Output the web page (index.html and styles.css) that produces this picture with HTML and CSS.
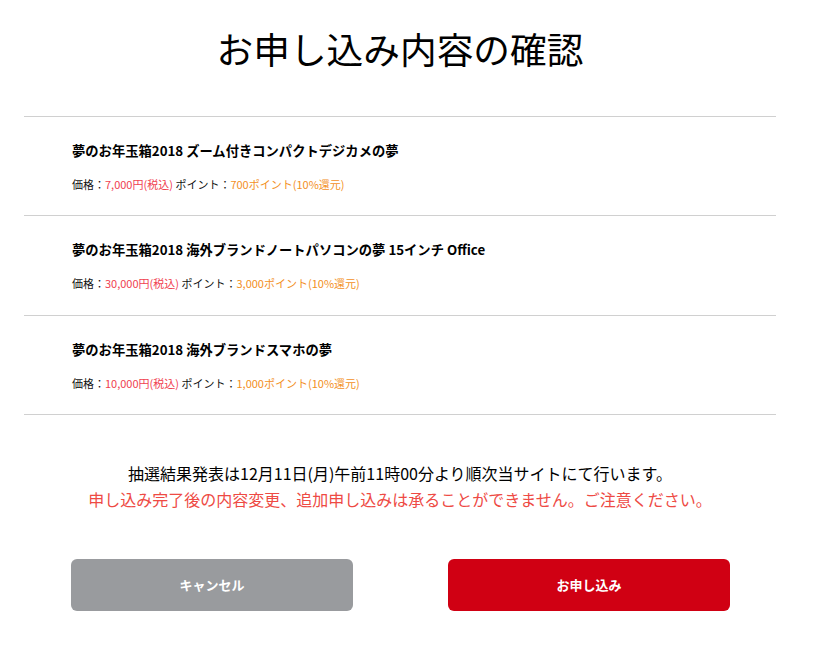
FILE: index.html
```html
<!DOCTYPE html>
<html lang="ja">
<head>
<meta charset="utf-8">
<title>お申し込み内容の確認</title>
<link rel="stylesheet" href="styles.css">
</head>
<body>
<main class="page">
  <h1 class="title">お申し込み内容の確認</h1>
  <ul class="items">
    <li class="item">
      <p class="item-name">夢のお年玉箱2018 ズーム付きコンパクトデジカメの夢</p>
      <p class="item-meta"><span class="label">価格：</span><span class="price">7,000円(税込)</span> <span class="label">ポイント：</span><span class="point">700ポイント(10%還元)</span></p>
    </li>
    <li class="item">
      <p class="item-name">夢のお年玉箱2018 海外ブランドノートパソコンの夢 15インチ Office</p>
      <p class="item-meta"><span class="label">価格：</span><span class="price">30,000円(税込)</span> <span class="label">ポイント：</span><span class="point">3,000ポイント(10%還元)</span></p>
    </li>
    <li class="item">
      <p class="item-name">夢のお年玉箱2018 海外ブランドスマホの夢</p>
      <p class="item-meta"><span class="label">価格：</span><span class="price">10,000円(税込)</span> <span class="label">ポイント：</span><span class="point">1,000ポイント(10%還元)</span></p>
    </li>
  </ul>
  <div class="notice">
    <p class="notice-line">抽選結果発表は12月11日(月)午前11時00分より順次当サイトにて行います。</p>
    <p class="notice-line notice-warn">申し込み完了後の内容変更、追加申し込みは承ることができません。ご注意ください。</p>
  </div>
  <div class="actions">
    <button class="btn btn-cancel" type="button">キャンセル</button>
    <button class="btn btn-submit" type="button">お申し込み</button>
  </div>
</main>
</body>
</html>
```
FILE: styles.css
```css
* { box-sizing: border-box; }
html, body { margin: 0; padding: 0; background: #fff; }
body {
  font-family: "Noto Sans CJK JP", "Noto Sans", sans-serif;
  color: #000;
}
.page {
  width: 752px;
  margin-left: 24px;
  padding-top: 24px;
}
.title {
  margin: 0 0 44px;
  font-size: 36.7px;
  line-height: 48px;
  font-weight: 400;
  text-align: center;
}
.items {
  list-style: none;
  margin: 0;
  padding: 0;
  border-top: 1px solid #d0d0d0;
}
.item {
  padding: 24px 48px 23.3px;
  border-bottom: 1px solid #d0d0d0;
}
.item-name {
  margin: 0;
  font-size: 13.3px;
  line-height: 20px;
  font-weight: 700;
}
.item-meta {
  margin: 15px 0 0;
  font-size: 11px;
  line-height: 16px;
}
.label { color: #111; }
.price { color: #f0414f; }
.point { color: #f3901e; }
.notice {
  margin-top: 45px;
  text-align: center;
}
.notice-line {
  margin: 0;
  font-size: 16px;
  line-height: 26px;
}
.notice-warn { color: #ee4a44; }
.actions {
  display: flex;
  justify-content: space-between;
  padding: 0 46px 0 47px;
  margin-top: 47px;
}
.btn {
  width: 282px;
  height: 52px;
  border: 0;
  border-radius: 6px;
  color: #fff;
  font-family: inherit;
  font-size: 13px;
  font-weight: 700;
  cursor: pointer;
}
.btn-cancel { background: #999b9e; }
.btn-submit { background: #d00013; }
```
